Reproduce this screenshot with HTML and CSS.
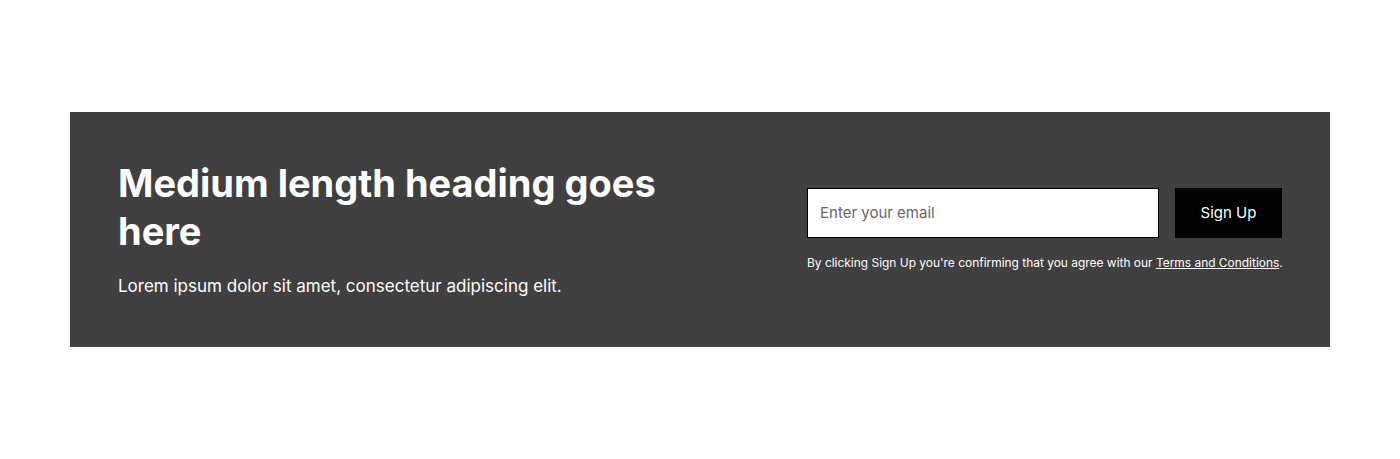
FILE: index.html
```html
<!DOCTYPE html>
<html lang="en">
<head>
<meta charset="utf-8">
<link rel="stylesheet" href="styles.css">
</head>
<body>
<section class="page">
  <div class="banner">
    <div class="copy">
      <h2 class="heading">Medium length heading goes here</h2>
      <p class="lead">Lorem ipsum dolor sit amet, consectetur adipiscing elit.</p>
    </div>
    <div class="signup">
      <form class="form">
        <input class="email" type="email" placeholder="Enter your email">
        <button class="btn" type="button">Sign Up</button>
      </form>
      <p class="note">By clicking Sign Up you're confirming that you agree with our <a href="#" class="link">Terms and Conditions</a>.</p>
    </div>
  </div>
</section>
</body>
</html>
```

FILE: styles.css
```css
* { box-sizing: border-box; }
html, body { margin: 0; padding: 0; background: #fff; }
body { font-family: Inter, "Noto Sans", sans-serif; }
.page { padding: 112px 70px; }
.banner {
  background: #404040;
  color: #fff;
  padding: 48px;
  display: grid;
  grid-template-columns: 1fr 475px;
  column-gap: 128px;
  align-items: center;
  height: 235px;
}
.heading {
  margin: 0;
  font-size: 38px;
  line-height: 1.25;
  font-weight: 700;
}
.lead {
  margin: 19px 0 0;
  font-size: 17px;
  line-height: 1.5;
}
.form { display: flex; gap: 16px; margin: 0; }
.email {
  flex: 1;
  height: 50px;
  border: 1px solid #000;
  background: #fff;
  padding: 0 12px;
  font-family: inherit;
  font-size: 15px;
  color: #000;
  outline: none;
  border-radius: 0;
}
.email::placeholder { color: #666; }
.btn {
  width: 107px;
  height: 50px;
  padding: 0;
  background: #000;
  color: #fff;
  border: 1px solid #000;
  font-family: inherit;
  font-size: 15px;
  border-radius: 0;
}
.note {
  margin: 16px 0 0;
  font-size: 11.95px;
  line-height: 1.5;
  white-space: nowrap;
}
.link { color: #fff; text-decoration: underline; }
```
